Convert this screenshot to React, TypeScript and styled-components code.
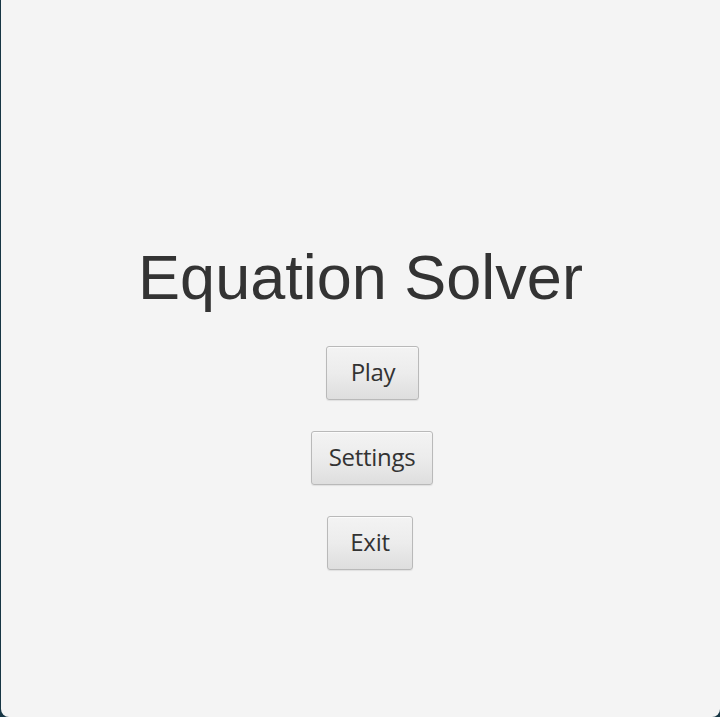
import styled, { createGlobalStyle } from "styled-components";

const GlobalStyle = createGlobalStyle`
  html, body {
    margin: 0;
    padding: 0;
    height: 100%;
    background: #173644;
  }
  #root {
    height: 100%;
  }
`;

const Window = styled.div`
  height: 100vh;
  box-sizing: border-box;
  margin-left: 1px;
  background: #f4f4f4;
  border-radius: 0 0 8px 8px;
  display: flex;
  flex-direction: column;
  align-items: center;
  padding-top: 241px;
`;

const Menu = styled.div`
  display: flex;
  flex-direction: column;
  align-items: center;
  gap: 31px;
`;

const Title = styled.h1`
  margin: 0 0 2px 0;
  font-family: "Liberation Sans", Arial, sans-serif;
  font-weight: 400;
  font-size: 63px;
  line-height: 72px;
  color: #333333;
`;

const MenuButton = styled.button<{ $shift: number; $width: number }>`
  width: ${(p) => p.$width}px;
  height: 54px;
  padding: 0 0 3px 0;
  margin-left: ${(p) => p.$shift}px;
  font-family: "Open Sans", "Noto Sans", sans-serif;
  font-size: 24px;
  letter-spacing: -0.3px;
  color: #333333;
  background: linear-gradient(to bottom, #f3f3f3 0%, #ececec 50%, #dedede 100%);
  border: 1px solid #b9b9b9;
  border-radius: 3px;
  box-shadow: inset 0 1px 0 #fbfbfb, 0 1px 1px rgba(0, 0, 0, 0.08);
  cursor: pointer;
`;

const App = () => {
  return (
    <>
      <GlobalStyle />
      <Window>
        <Menu>
          <Title>Equation Solver</Title>
          <MenuButton $shift={25} $width={93}>Play</MenuButton>
          <MenuButton $shift={23} $width={122}>Settings</MenuButton>
          <MenuButton $shift={19} $width={86}>Exit</MenuButton>
        </Menu>
      </Window>
    </>
  );
};

export default App;
